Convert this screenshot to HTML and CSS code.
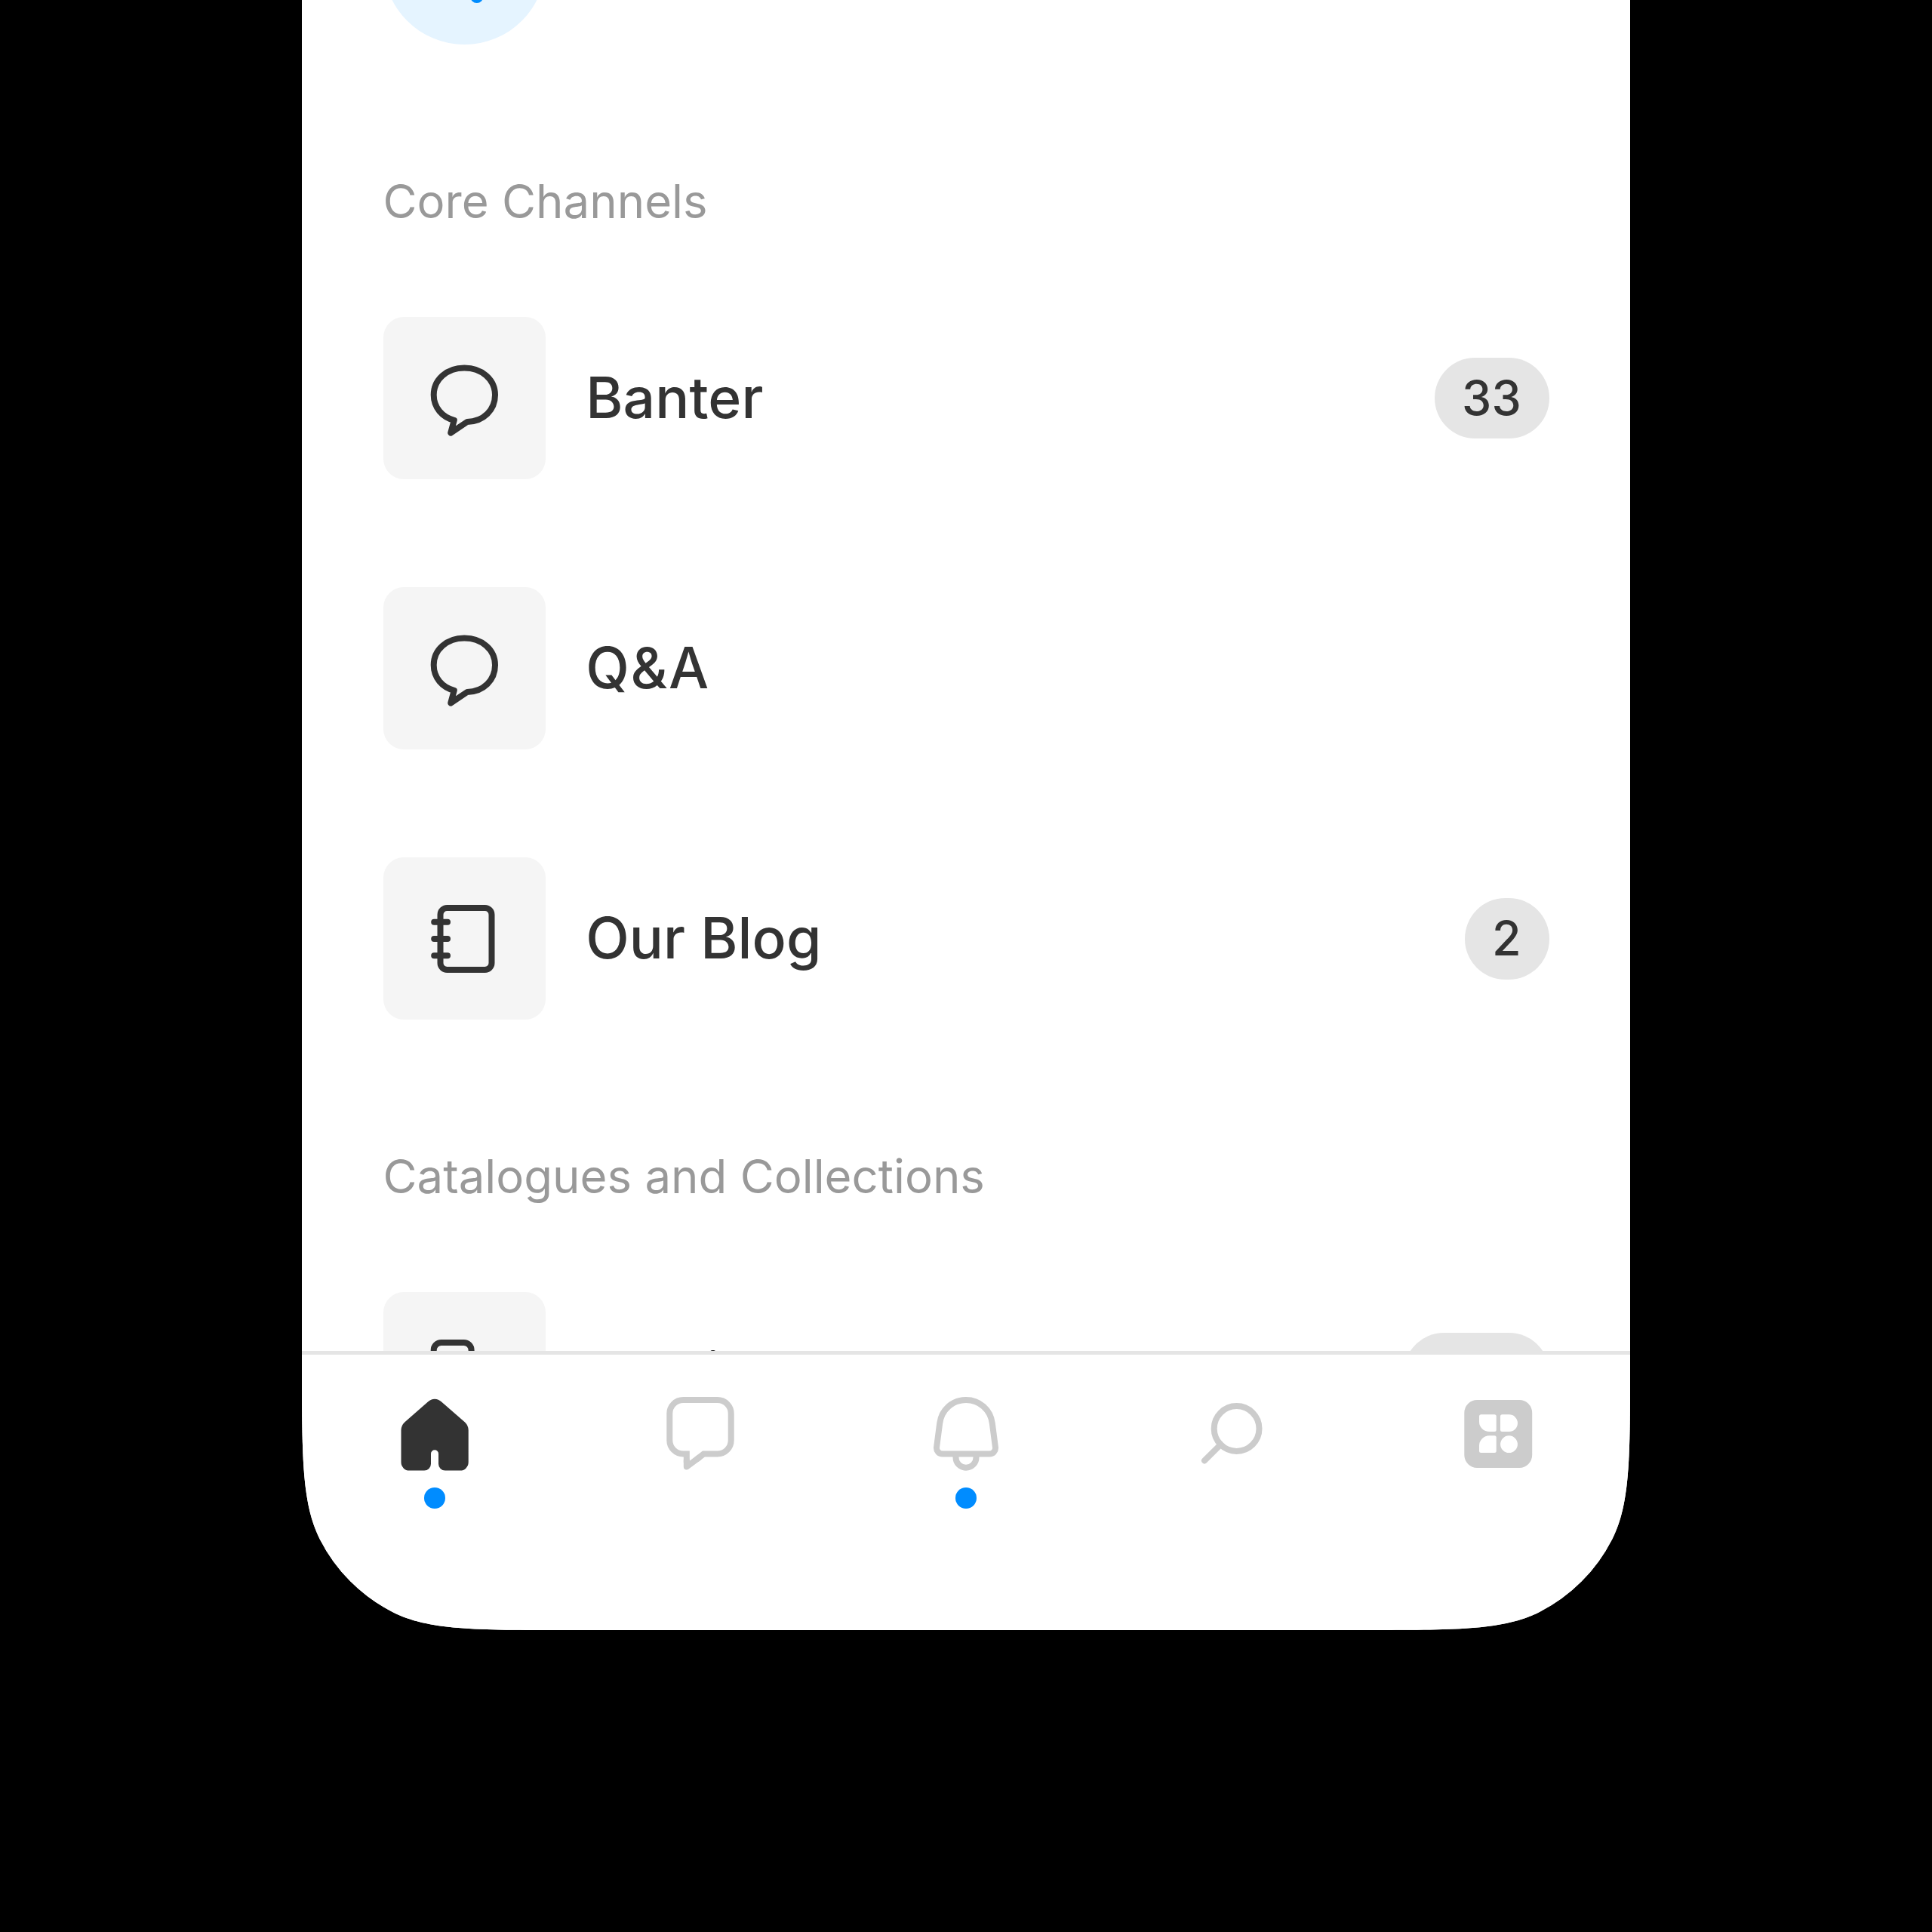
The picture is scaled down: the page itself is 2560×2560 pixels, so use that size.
FILE: index.html
```html
<!DOCTYPE html>
<html lang="en">
<head>
<meta charset="utf-8">
<title>Channels</title>
<link rel="stylesheet" href="styles.css">
</head>
<body>
<main class="phone">
  <div class="feed">
    <div class="row row-first">
      <span class="avatar">
        <svg class="icon solid" viewBox="0 0 120 120"><circle cx="76.8" cy="103.4" r="8.6"/></svg>
      </span>
    </div>
    <h2 class="section">Core Channels</h2>
    <a class="row">
      <span class="tile"><svg class="icon" viewBox="0 0 120 120"><path d="M60.3 19.6C83.5 19.6 101 35 101 55.3C101 75 86 90.6 64 91L42.2 105.6L46.8 88.8C31 85 19.7 72 19.7 55.3C19.7 35 37 19.6 60.3 19.6Z"/></svg></span>
      <span class="name">Banter</span>
      <span class="count">33</span>
    </a>
    <a class="row">
      <span class="tile"><svg class="icon" viewBox="0 0 120 120"><path d="M60.3 19.6C83.5 19.6 101 35 101 55.3C101 75 86 90.6 64 91L42.2 105.6L46.8 88.8C31 85 19.7 72 19.7 55.3C19.7 35 37 19.6 60.3 19.6Z"/></svg></span>
      <span class="name name-wide">Q&amp;A</span>
    </a>
    <a class="row">
      <span class="tile"><svg class="icon" viewBox="0 0 120 120"><rect x="28.5" y="19" width="68" height="82" rx="9"/><path d="M20.2 37.7H38M20.2 60H38M20.2 82.3H38"/></svg></span>
      <span class="name">Our Blog</span>
      <span class="count">2</span>
    </a>
    <h2 class="section">Catalogues and Collections</h2>
    <a class="row">
      <span class="tile"><svg class="icon" viewBox="0 0 120 120"><rect x="19.7" y="18.9" width="49.9" height="62" rx="10"/><path d="M82 38H91a10 10 0 0 1 10 10V91a10 10 0 0 1-10 10H48a10 10 0 0 1-10-10"/></svg></span>
      <span class="name">Media Gallery</span>
      <span class="count">284</span>
    </a>
  </div>
  <nav class="tabs">
    <a class="tab active">
      <svg class="icon solid" viewBox="0 0 120 120"><path d="M51 17.6C56 12.4 64 12.4 69 17.6L100 44.5Q104.7 49 104.7 55V97.6A11 11 0 0 1 93.7 108.6H73.8A8.8 8.8 0 0 1 65 99.8V86.3A5 5 0 0 0 55 86.3V99.8A8.8 8.8 0 0 1 46.2 108.6H26.5A11 11 0 0 1 15.5 97.6V55Q15.5 49 20.2 44.5Z"/></svg>
      <span class="dot"></span>
    </a>
    <a class="tab">
      <svg class="icon" viewBox="0 0 120 120"><path class="sharp" d="M41.8 98V86.5H37.3A18 18 0 0 1 19.3 68.5V33A18 18 0 0 1 37.3 15H82.7A18 18 0 0 1 100.7 33V68.5A18 18 0 0 1 82.7 86.5H64.4L55 93.9"/><path d="M41.8 95V103.6L58 91.5"/></svg>
    </a>
    <a class="tab">
      <svg class="icon" viewBox="0 0 120 120"><path d="M25.2 46C27.5 28 42 15 60 15S92.5 28 94.8 46L99 78A7.8 7.8 0 0 1 91.2 86.5H28.8A7.8 7.8 0 0 1 21 78ZM46.5 88V91.2A13.5 13.5 0 0 0 73.5 91.2V88"/></svg>
      <span class="dot"></span>
    </a>
    <a class="tab">
      <svg class="icon" viewBox="0 0 120 120"><circle cx="66.6" cy="53" r="29.9"/><path d="M24 95.4L45.5 74"/></svg>
    </a>
    <a class="tab">
      <svg class="icon solid" viewBox="0 0 120 120"><path fill-rule="evenodd" d="M33.3 15H89.2a17 17 0 0 1 17 17V88a17 17 0 0 1-17 17H33.3a17 17 0 0 1-17-17V32a17 17 0 0 1 17-17ZM38.5 34.3H56.2a2.5 2.5 0 0 1 2.5 2.5V54.5a2.5 2.5 0 0 1-2.5 2.5H49.5A13.5 13 0 0 1 36 44V36.8a2.5 2.5 0 0 1 2.5-2.5ZM66.5 34.3H75.6a11.35 11.35 0 0 1 0 22.7H66.5a2.5 2.5 0 0 1-2.5-2.5V36.8a2.5 2.5 0 0 1 2.5-2.5ZM49.5 62.3H56.2a2.5 2.5 0 0 1 2.5 2.5V82.5a2.5 2.5 0 0 1-2.5 2.5H38.5a2.5 2.5 0 0 1-2.5-2.5V75.8A13.5 13.5 0 0 1 49.5 62.3ZM75.5 62.3a11.4 11.4 0 0 1 0 22.8a11.4 11.4 0 0 1 0-22.8Z"/></svg>
    </a>
  </nav>
</main>
</body>
</html>
```
FILE: styles.css
```css
* { box-sizing: border-box; }

body {
  margin: 0;
  min-height: 2560px;
  background: #000;
  color: #333;
  font-family: Inter, "Liberation Sans", sans-serif;
}

.phone {
  display: flex;
  flex-direction: column;
  width: 1760px;
  height: 2160px;
  margin: 0 auto;
  overflow: hidden;
  background: #fff;
  clip-path: path("M0 0H1760V1808c0 123.2 0 184.8 -24 231.9a220 220 0 0 1 -96.1 96.1c-47.1 24 -108.7 24 -231.9 24H352c-123.2 0 -184.8 0 -231.9 -24a220 220 0 0 1 -96.1 -96.1c-24 -47.1 -24 -108.7 -24 -231.9Z");
}

.feed {
  display: flex;
  flex-direction: column;
  height: 1790px;
  flex: none;
  overflow: hidden;
}

.row {
  display: flex;
  align-items: center;
  flex: none;
  height: 358.2px;
  padding: 0 107.5px;
}

.row-first { margin-top: -227.3px; }

.avatar, .tile {
  display: flex;
  align-items: center;
  justify-content: center;
  flex: none;
  width: 215px;
  height: 215px;
}

.avatar {
  border-radius: 50%;
  background: #e5f4ff;
  color: #008cff;
}

.tile {
  border-radius: 27px;
  background: #f5f5f5;
}

.icon {
  display: block;
  width: 120px;
  height: 120px;
  fill: none;
  stroke: currentColor;
  stroke-width: 8;
  stroke-linecap: round;
  stroke-linejoin: round;
}

.icon.solid { fill: currentColor; stroke: none; }
.icon .sharp { stroke-linecap: butt; stroke-linejoin: miter; }

.name {
  margin-left: 53.7px;
  padding-bottom: 1px;
  font-size: 75px;
  font-weight: 500;
  line-height: 108px;
  letter-spacing: 0.1px;
}

.name-wide { letter-spacing: 1.6px; }

.count {
  margin-left: auto;
  height: 107.5px;
  padding: 0 36.8px 0 36.2px;
  border-radius: 53.7px;
  background: #e5e5e5;
  font-size: 62.7px;
  font-weight: 500;
  line-height: 107.5px;
}

.section {
  display: flex;
  align-items: center;
  flex: none;
  height: 217.6px;
  margin: 0;
  padding: 54px 107.5px 0;
  color: #999;
  font-size: 61.7px;
  font-weight: 400;
  line-height: 90px;
}

.tabs {
  display: grid;
  grid-template-columns: repeat(5, 1fr);
  flex: 1;
  border-top: 5px solid #e5e5e5;
  background: #fff;
}

.tab {
  display: flex;
  flex-direction: column;
  align-items: center;
  gap: 11px;
  padding-top: 45px;
  color: #ccc;
}

.tab.active { color: #333; }

.dot {
  width: 28px;
  height: 28px;
  border-radius: 50%;
  background: #008cff;
}
```
